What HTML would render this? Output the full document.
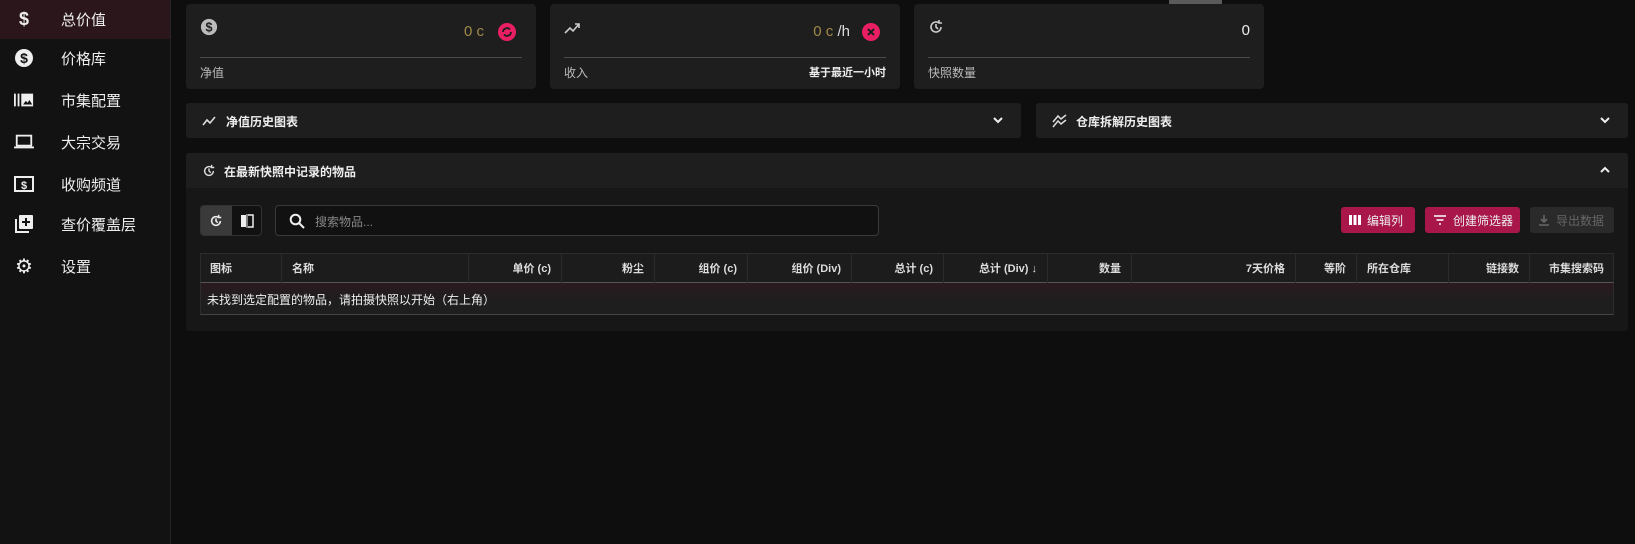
<!DOCTYPE html>
<html><head><meta charset="utf-8"><style>
*{box-sizing:border-box;margin:0;padding:0}
body{width:1635px;height:544px;background:#0e0e0e;font-family:"Liberation Sans","Noto Sans CJK SC",sans-serif;color:#e8e8e8;position:relative;overflow:hidden}
.abs{position:absolute}
.side{left:0;top:0;width:171px;height:544px;background:#121212;border-right:1px solid #262626}
.item{position:absolute;left:0;width:170px;height:40px;display:flex;align-items:center;font-size:15px;color:#eee}
.item .ic{position:absolute;left:14px;width:20px;height:20px;display:flex;align-items:center;justify-content:center}
.item .t{position:absolute;left:61px}
.card{background:#1e1e1e;border-radius:4px}
.hr{position:absolute;height:1px;background:#4a4a4a}
.sm{font-size:12px;color:#bbb}
.bar{background:#1e1e1e;border-radius:3px;height:35px}
.bar .lbl{position:absolute;left:40px;top:10px;font-size:12px;font-weight:bold;color:#eee}
.chev{position:absolute;top:10px;width:14px;height:14px}
.btn{position:absolute;top:207px;height:26px;border-radius:3px;font-size:12px;display:flex;align-items:center;padding-left:8px;gap:6px}
.th{position:absolute;top:253px;height:30px;font-size:11px;font-weight:600;color:#ddd;display:flex;align-items:center;border-right:1px solid #2c2c2c;padding:0 10px}
</style></head><body>
<div class="abs side">
 <div class="item" style="top:0;height:39px;background:#2b161c"><span class="ic" style="font-weight:bold;font-size:18px">$</span><span class="t">总价值</span></div>
 <div class="item" style="top:38px"><span class="ic"><svg width="20" height="20" viewBox="0 0 20 20"><circle cx="10" cy="10" r="9" fill="#eee"/><text x="10" y="15" font-size="14" font-weight="bold" text-anchor="middle" fill="#121212" font-family="Liberation Sans">$</text></svg></span><span class="t">价格库</span></div>
 <div class="item" style="top:80px"><span class="ic"><svg width="22" height="16" viewBox="0 0 22 16"><rect x="0" y="1" width="2" height="14" fill="#eee"/><rect x="4" y="1" width="2" height="14" fill="#eee"/><rect x="8" y="1" width="13" height="14" fill="#eee"/><path d="M10 13l3-4 2 2 2-3 3 5z" fill="#121212"/></svg></span><span class="t">市集配置</span></div>
 <div class="item" style="top:122px"><span class="ic"><svg width="22" height="18" viewBox="0 0 22 18"><rect x="3" y="2" width="16" height="11" fill="none" stroke="#eee" stroke-width="2"/><rect x="0" y="14" width="22" height="2" fill="#eee"/></svg></span><span class="t">大宗交易</span></div>
 <div class="item" style="top:164px"><span class="ic"><svg width="20" height="18" viewBox="0 0 20 18"><rect x="1" y="2" width="18" height="14" fill="none" stroke="#eee" stroke-width="2"/><text x="10" y="14" font-size="11" font-weight="bold" text-anchor="middle" fill="#eee" font-family="Liberation Sans">$</text></svg></span><span class="t">收购频道</span></div>
 <div class="item" style="top:204px"><span class="ic"><svg width="20" height="20" viewBox="0 0 20 20"><path d="M2 5v13h13" fill="none" stroke="#eee" stroke-width="2"/><rect x="5" y="1" width="14" height="14" rx="1" fill="#eee"/><path d="M12 4v8M8 8h8" stroke="#121212" stroke-width="2"/></svg></span><span class="t">查价覆盖层</span></div>
 <div class="item" style="top:246px"><span class="ic" style="font-size:20px">⚙</span><span class="t">设置</span></div>
</div>
<div class="abs" style="left:1169px;top:0;width:53px;height:7px;background:#5a5a5a;border-radius:0 0 3px 3px"></div>

<div class="abs card" style="left:186px;top:4px;width:350px;height:85px">
 <svg class="abs" style="left:14px;top:14px" width="18" height="18" viewBox="0 0 20 20"><circle cx="10" cy="10" r="9" fill="#bbb"/><text x="10" y="15" font-size="14" font-weight="bold" text-anchor="middle" fill="#1e1e1e" font-family="Liberation Sans">$</text></svg>
 <span class="abs" style="right:52px;top:19px;font-size:15px;color:#a08a4a">0 c</span>
 <svg class="abs" style="right:20px;top:19px" width="18" height="18" viewBox="0 0 18 18"><circle cx="9" cy="9" r="9" fill="#e91e63"/><path d="M5 9a4 4 0 0 1 7-2.5M13 9a4 4 0 0 1-7 2.5" stroke="#1e1e1e" stroke-width="1.8" fill="none"/></svg>
 <div class="hr" style="left:14px;right:14px;top:53px"></div>
 <span class="abs sm" style="left:14px;top:60px">净值</span>
</div>
<div class="abs card" style="left:550px;top:4px;width:350px;height:85px">
 <svg class="abs" style="left:14px;top:18px" width="18" height="12" viewBox="0 0 18 12"><path d="M1 11l5-5 3 3 6-7M11 2h4v4" stroke="#ccc" stroke-width="1.6" fill="none"/></svg>
 <span class="abs" style="right:50px;top:19px;font-size:15px;color:#a08a4a">0 c <span style="color:#ddd">/h</span></span>
 <svg class="abs" style="right:20px;top:19px" width="18" height="18" viewBox="0 0 18 18"><circle cx="9" cy="9" r="9" fill="#e91e63"/><path d="M6 6l6 6M12 6l-6 6" stroke="#1e1e1e" stroke-width="2"/></svg>
 <div class="hr" style="left:14px;right:14px;top:53px"></div>
 <span class="abs sm" style="left:14px;top:60px">收入</span>
 <span class="abs" style="right:14px;top:60px;font-size:11px;font-weight:bold;color:#eee">基于最近一小时</span>
</div>
<div class="abs card" style="left:914px;top:4px;width:350px;height:85px">
 <svg class="abs" style="left:14px;top:15px" width="16" height="16" viewBox="0 0 16 16"><path d="M13 8a5 5 0 1 1-2-4M11 1v3h3M8 5v3l2 2" stroke="#ccc" stroke-width="1.6" fill="none"/></svg>
 <span class="abs" style="right:14px;top:18px;font-size:15px;color:#eee">0</span>
 <div class="hr" style="left:14px;right:14px;top:53px"></div>
 <span class="abs sm" style="left:14px;top:60px">快照数量</span>
</div>

<div class="abs bar" style="left:186px;top:103px;width:835px">
 <svg class="abs" style="left:16px;top:12px" width="14" height="12" viewBox="0 0 14 12"><path d="M1 10l4-5 3 3 5-6" stroke="#ddd" stroke-width="1.6" fill="none"/></svg>
 <span class="lbl">净值历史图表</span>
 <svg class="chev" style="right:16px" viewBox="0 0 14 14"><path d="M3 5l4 4 4-4" stroke="#eee" stroke-width="2" fill="none"/></svg>
</div>
<div class="abs bar" style="left:1036px;top:103px;width:592px">
 <svg class="abs" style="left:16px;top:11px" width="16" height="14" viewBox="0 0 16 14"><path d="M1 8l5-6 3 3 5-4M1 13l5-6 3 3 5-4" stroke="#ddd" stroke-width="1.5" fill="none"/></svg>
 <span class="lbl">仓库拆解历史图表</span>
 <svg class="chev" style="right:16px" viewBox="0 0 14 14"><path d="M3 5l4 4 4-4" stroke="#eee" stroke-width="2" fill="none"/></svg>
</div>

<div class="abs" style="left:186px;top:153px;width:1442px;height:178px;background:#171717;border-radius:3px">
 <div class="abs" style="left:0;top:0;width:100%;height:35px;background:#1e1e1e;border-radius:3px 3px 0 0"></div>
 <svg class="abs" style="left:16px;top:11px" width="14" height="14" viewBox="0 0 16 16"><path d="M13 8a5 5 0 1 1-2-4M11 1v3h3M8 5v3l2 2" stroke="#ddd" stroke-width="1.6" fill="none"/></svg>
 <span class="abs" style="left:38px;top:10px;font-size:12px;font-weight:bold;color:#eee">在最新快照中记录的物品</span>
 <svg class="abs" style="right:16px;top:10px" width="14" height="14" viewBox="0 0 14 14"><path d="M3 9l4-4 4 4" stroke="#eee" stroke-width="2" fill="none"/></svg>
</div>

<div class="abs" style="left:200px;top:205px;width:62px;height:31px;border:1px solid #333;border-radius:4px;overflow:hidden;background:#111">
 <div class="abs" style="left:0;top:0;width:31px;height:31px;background:#3a3a3a"></div>
 <svg class="abs" style="left:8px;top:8px" width="14" height="14" viewBox="0 0 16 16"><path d="M13 8a5 5 0 1 1-2-4M11 1v3h3M8 5v3l2 2" stroke="#eee" stroke-width="1.8" fill="none"/></svg>
 <svg class="abs" style="left:38px;top:7px" width="16" height="16" viewBox="0 0 16 16"><rect x="2" y="2" width="5" height="12" fill="#eee"/><path d="M9 2h5v12h-5" stroke="#eee" stroke-width="1.5" fill="none"/><path d="M8 1v14" stroke="#eee"/></svg>
</div>
<div class="abs" style="left:275px;top:205px;width:604px;height:31px;border:1px solid #3a3a3a;border-radius:4px;background:#111">
 <svg class="abs" style="left:13px;top:7px" width="16" height="16" viewBox="0 0 16 16"><circle cx="6.5" cy="6.5" r="4.8" stroke="#eee" stroke-width="2" fill="none"/><path d="M10 10l5 5" stroke="#eee" stroke-width="2"/></svg>
 <span class="abs" style="left:39px;top:7px;font-size:12px;color:#888">搜索物品...</span>
</div>

<div class="btn" style="left:1341px;width:74px;background:#a8164a;color:#eee"><svg width="12" height="10" viewBox="0 0 12 10"><rect x="0" y="0" width="3" height="10" fill="#fff"/><rect x="4.5" y="0" width="3" height="10" fill="#fff"/><rect x="9" y="0" width="3" height="10" fill="#fff"/></svg>编辑列</div>
<div class="btn" style="left:1425px;width:95px;background:#a8164a;color:#eee"><svg width="14" height="10" viewBox="0 0 14 10"><path d="M1 1h12M3.5 5h7M6 9h2" stroke="#fff" stroke-width="1.5"/></svg>创建筛选器</div>
<div class="btn" style="left:1530px;width:84px;background:#2a2a2a;color:#666"><svg width="12" height="12" viewBox="0 0 12 12"><path d="M6 1v6M3 5l3 3 3-3M1 11h10" stroke="#666" stroke-width="1.6" fill="none"/></svg>导出数据</div>

<div class="abs" style="left:200px;top:253px;width:1414px;height:30px;background:#1c1c1c;border:1px solid #2c2c2c;border-bottom:1px solid #555"></div>
<div class="th" style="left:200px;width:82px">图标</div>
<div class="th" style="left:282px;width:187px">名称</div>
<div class="th" style="left:469px;width:93px;justify-content:flex-end">单价 (c)</div>
<div class="th" style="left:562px;width:93px;justify-content:flex-end">粉尘</div>
<div class="th" style="left:655px;width:93px;justify-content:flex-end">组价 (c)</div>
<div class="th" style="left:748px;width:104px;justify-content:flex-end">组价 (Div)</div>
<div class="th" style="left:852px;width:92px;justify-content:flex-end">总计 (c)</div>
<div class="th" style="left:944px;width:104px;justify-content:flex-end">总计 (Div) ↓</div>
<div class="th" style="left:1048px;width:84px;justify-content:flex-end">数量</div>
<div class="th" style="left:1132px;width:164px;justify-content:flex-end">7天价格</div>
<div class="th" style="left:1296px;width:61px;justify-content:flex-end">等阶</div>
<div class="th" style="left:1357px;width:92px">所在仓库</div>
<div class="th" style="left:1449px;width:81px;justify-content:flex-end">链接数</div>
<div class="th" style="left:1530px;width:84px;justify-content:flex-end;border-right:none">市集搜索码</div>
<div class="abs" style="left:200px;top:283px;width:1414px;height:32px;background:linear-gradient(#2a1a1f,#1e1e1e 60%);border:1px solid #2c2c2c;border-top:none;border-bottom:1px solid #444"></div>
<span class="abs" style="left:207px;top:291px;font-size:12px;color:#eee">未找到选定配置的物品，请拍摄快照以开始（右上角）</span>
</body></html>
